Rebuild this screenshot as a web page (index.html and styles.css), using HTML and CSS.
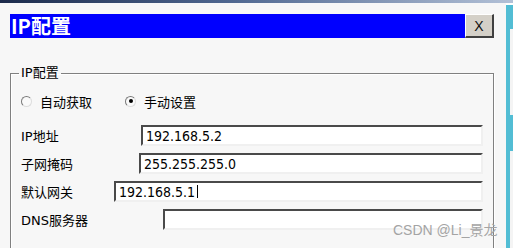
FILE: index.html
```html
<!DOCTYPE html>
<html lang="zh-CN">
<head>
  <meta charset="UTF-8">
  <meta name="viewport" content="width=device-width, initial-scale=1.0">
  <title>IP配置</title>
  <link rel="stylesheet" href="styles.css">
</head>
<body>
  <div class="topline"></div>
  <div class="screen">
    <div class="window">
      <div class="titlebar">
        <div class="title">IP配置</div>
        <button class="close">X</button>
      </div>

      <fieldset class="group">
        <legend>IP配置</legend>
        <div class="modes">
          <label class="radio radio-auto"><span class="dot"></span>自动获取</label>
          <label class="radio checked"><span class="dot"></span>手动设置</label>
        </div>
        <div class="row first">
          <span class="label">IP地址</span>
          <div class="field w-ip">192.168.5.2</div>
        </div>
        <div class="row">
          <span class="label">子网掩码</span>
          <div class="field w-mask">255.255.255.0</div>
        </div>
        <div class="row">
          <span class="label">默认网关</span>
          <div class="field w-gw">192.168.5.1<span class="caret"></span></div>
        </div>
        <div class="row">
          <span class="label">DNS服务器</span>
          <div class="field w-dns"></div>
        </div>
      </fieldset>

      <div class="watermark">CSDN @Li_景龙</div>
    </div>
    <div class="side">
      <div class="side-top"></div>
      <div class="side-body">
        <div class="side-panel upper"></div>
        <div class="side-panel lower"></div>
      </div>
    </div>
  </div>
</body>
</html>
```

FILE: styles.css
```css
body {
  margin: 0;
  height: 248px;
  overflow: hidden;
  background-color: #f7f7f7;
  font-family: "DejaVu Sans", "Noto Sans CJK SC", sans-serif;
  font-size: 13px;
  color: #000;
}
.topline {
  height: 3px;
  background: linear-gradient(to right, #1c2b4b, #4f6790 45%, #b3c1d7);
}
.screen {
  display: flex;
  height: 245px;
}
.window {
  flex: 1;
  position: relative;
  overflow: hidden;
  padding: 11px 12px 0 10px;
}

/* title bar */
.titlebar {
  display: flex;
  height: 24px;
}
.title {
  flex: 1;
  background-color: #0000ff;
  color: #fff;
  font: bold 20px/24px "Noto Sans CJK SC", sans-serif;
  padding-left: 1px;
}
.close {
  width: 29px;
  padding: 0;
  background-color: #d4d0c8;
  border-style: solid;
  border-width: 1px 2px 2px 1px;
  border-color: #fff #404040 #404040 #fff;
  font: 14px "Liberation Sans", sans-serif;
  color: #111;
}

/* group box */
.group {
  margin: 27px 0 0;
  padding: 0 10px 0 10px;
  min-height: 200px;
  border: 1px solid #808080;
  box-shadow: 1px 1px 0 #fff, inset 1px 1px 0 #fff;
}
.group legend {
  padding: 0 2px;
  margin-left: -2px;
  line-height: 16px;
}
.modes {
  display: flex;
  align-items: center;
  height: 16px;
  margin-top: 12px;
}
.radio {
  display: flex;
  align-items: center;
  gap: 8px;
}
.radio-auto {
  width: 104px;
}
.dot {
  width: 11px;
  height: 11px;
  box-sizing: border-box;
  border-radius: 50%;
  background-color: #fafafa;
  border: 1px solid;
  border-color: #7a7a7a #dcdcdc #dcdcdc #7a7a7a;
  display: flex;
  align-items: center;
  justify-content: center;
}
.checked .dot::after {
  content: "";
  width: 4px;
  height: 4px;
  border-radius: 50%;
  background-color: #000;
}

/* rows */
.row {
  display: flex;
  justify-content: space-between;
  align-items: center;
  height: 21px;
  margin-top: 7px;
}
.row.first {
  margin-top: 16px;
}
.field {
  box-sizing: border-box;
  height: 21px;
  display: flex;
  align-items: center;
  padding-left: 3px;
  background-color: #fff;
  border-style: solid;
  border-width: 2px;
  border-color: #4a4a4a #f0f0f0 #f0f0f0 #4a4a4a;
  font-family: "DejaVu Sans Condensed", "Liberation Sans", sans-serif;
  font-size: 14px;
}
.w-ip { width: 342px; }
.w-mask { width: 344px; }
.w-gw { width: 369px; }
.w-dns { width: 320px; }
.caret {
  width: 1px;
  height: 13px;
  margin-left: 2px;
  background-color: #000;
}

.watermark {
  position: absolute;
  left: 393px;
  top: 219px;
  font: 14px/16px "Liberation Sans", "Noto Sans CJK SC", sans-serif;
  color: #a4a4a4;
}

/* right edge of the desktop */
.side {
  width: 7px;
  display: flex;
  flex-direction: column;
}
.side-top {
  height: 32px;
  background: linear-gradient(#d4d0c8 19px, #f0f0f0 19px, #f0f0f0 20px, #d4d0c8 20px);
  border-bottom: 2px solid #fff;
}
.side-body {
  flex: 1;
  background-color: #52bdd4;
  padding-left: 4px;
}
.side-panel {
  background-color: #f4f4f4;
}
.side-panel.upper {
  margin-top: 24px;
  height: 86px;
}
.side-panel.lower {
  margin-top: 36px;
  height: 100px;
}
```
